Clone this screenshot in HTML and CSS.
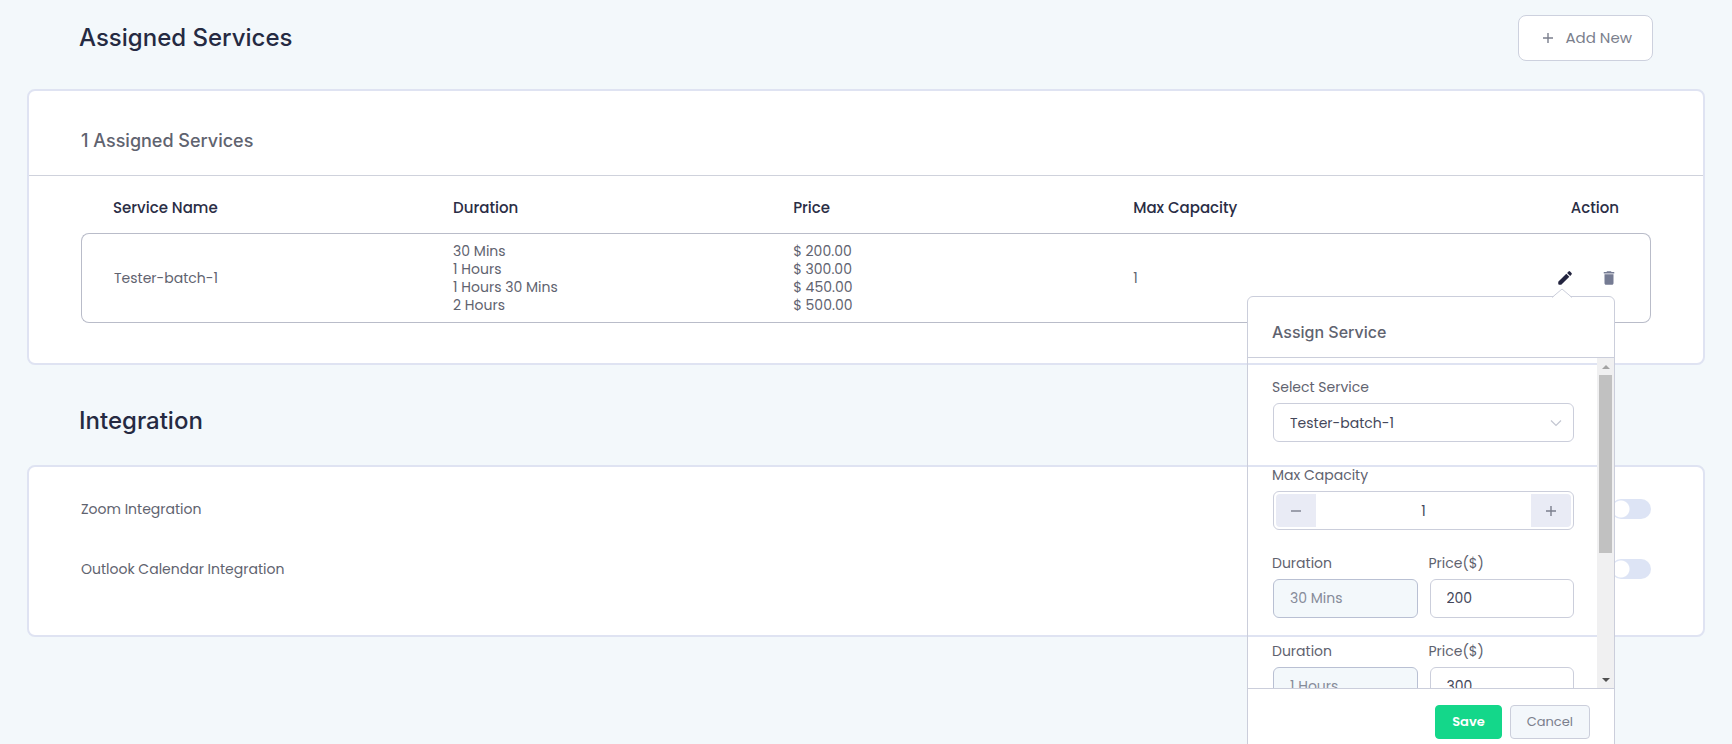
FILE: index.html
```html
<!DOCTYPE html>
<html lang="en">
<head>
<meta charset="utf-8">
<meta name="viewport" content="width=device-width, initial-scale=1">
<title>Assigned Services</title>
<link rel="stylesheet" href="styles.css">
</head>
<body>
<main class="page">
  <header class="section-head">
    <h1 class="title">Assigned Services</h1>
    <button class="add-btn" type="button">
      <svg class="add-icon" viewBox="0 0 12 12" aria-hidden="true"><path d="M6 1v10M1 6h10"/></svg>
      Add New
    </button>
  </header>

  <section class="card card-services">
    <h2 class="card-title">1 Assigned Services</h2>
    <div class="table-wrap">
      <table class="services">
        <thead>
          <tr><th class="col-name">Service Name</th><th class="col-mid">Duration</th><th class="col-mid">Price</th><th>Max Capacity</th><th class="col-action">Action</th></tr>
        </thead>
        <tbody>
          <tr>
            <td>Tester-batch-1</td>
            <td>30 Mins<br>1 Hours<br>1 Hours 30 Mins<br>2 Hours</td>
            <td>$ 200.00<br>$ 300.00<br>$ 450.00<br>$ 500.00</td>
            <td>1</td>
            <td>
              <div class="actions">
                <div class="edit">
                  <button class="icon-btn" type="button" aria-label="Edit">
                    <svg viewBox="0 0 24 24" aria-hidden="true"><path d="M3 17v2.600q0 1.400 1.400 1.400h2.600L17.800 10.300l-4.100-4.100zM20.700 7.300a1.500 1.500 0 0 0 0-2.100l-1.900-1.900a1.500 1.500 0 0 0-2.100 0l-1.900 2 4.100 4.100z"/></svg>
                  </button>
                  <form class="popover">
                    <svg class="popover-arrow" viewBox="0 0 20 10" aria-hidden="true"><path class="arrow-fill" d="M0 10 10 1 20 10z"/><path class="arrow-line" d="M0 9.500 10 1 20 9.500"/></svg>
                    <h3 class="popover-title">Assign Service</h3>
                    <div class="popover-body">
                      <div class="fields">
                        <div class="field">
                          <label for="service">Select Service</label>
                          <div class="select-wrap">
                            <select class="control" id="service"><option>Tester-batch-1</option></select>
                            <svg class="chevron" viewBox="0 0 12 8" aria-hidden="true"><path d="M1 1.500 6 6.500l5-5"/></svg>
                          </div>
                        </div>
                        <div class="field">
                          <label for="capacity">Max Capacity</label>
                          <div class="stepper">
                            <button class="step step-minus" type="button" aria-label="Decrease"><svg viewBox="0 0 12 12" aria-hidden="true"><path d="M1 6h10"/></svg></button>
                            <input class="step-value" id="capacity" type="text" value="1">
                            <button class="step step-plus" type="button" aria-label="Increase"><svg viewBox="0 0 12 12" aria-hidden="true"><path d="M6 1v10M1 6h10"/></svg></button>
                          </div>
                        </div>
                        <div class="pair">
                          <div class="field"><label for="d1">Duration</label><input class="control" id="d1" type="text" value="30 Mins" disabled></div>
                          <div class="field"><label for="p1">Price($)</label><input class="control" id="p1" type="text" value="200"></div>
                        </div>
                        <div class="pair">
                          <div class="field"><label for="d2">Duration</label><input class="control" id="d2" type="text" value="1 Hours" disabled></div>
                          <div class="field"><label for="p2">Price($)</label><input class="control" id="p2" type="text" value="300"></div>
                        </div>
                      </div>
                      <div class="scrollbar" aria-hidden="true">
                        <svg class="scroll-arrow scroll-up" viewBox="0 0 8 4"><path d="M0 4 4 0l4 4z"/></svg>
                        <div class="scroll-thumb"></div>
                        <svg class="scroll-arrow scroll-down" viewBox="0 0 8 4"><path d="M0 0l4 4 4-4z"/></svg>
                      </div>
                    </div>
                    <div class="popover-foot">
                      <button class="btn btn-save" type="button">Save</button>
                      <button class="btn btn-cancel" type="button">Cancel</button>
                    </div>
                  </form>
                </div>
                <button class="icon-btn icon-muted" type="button" aria-label="Delete">
                  <svg viewBox="0 0 24 24" aria-hidden="true"><path d="M6 19c0 1.100.9 2 2 2h8c1.100 0 2-.9 2-2V7H6zM19 4h-3.500l-1-1h-5l-1 1H5v2h14z"/></svg>
                </button>
              </div>
            </td>
          </tr>
        </tbody>
      </table>
    </div>
  </section>

  <header class="section-head section-head-integration">
    <h1 class="title">Integration</h1>
  </header>

  <section class="card card-integration">
    <div class="toggle-row"><label for="zoom">Zoom Integration</label><input class="toggle" id="zoom" type="checkbox" role="switch"></div>
    <div class="toggle-row"><label for="outlook">Outlook Calendar Integration</label><input class="toggle" id="outlook" type="checkbox" role="switch"></div>
  </section>
</main>
</body>
</html>
```
FILE: styles.css
```css
* { box-sizing: border-box; }

body {
  margin: 0;
  background: #f3f8fb;
  color: #5f636f;
  font: 400 14px/18px Poppins, Inter, sans-serif;
}

h1, h2, h3 { margin: 0; font-family: Inter, sans-serif; font-weight: 500; }
button, input, select { font: inherit; color: inherit; margin: 0; }
button { cursor: pointer; }
svg { display: block; }

.page {
  min-height: 100vh;
  padding: 0 27px;
  overflow: hidden;
}

.section-head {
  display: flex;
  align-items: center;
  justify-content: space-between;
  height: 89px;
  padding: 0 52px 13px;
}
.section-head-integration { height: 100px; padding-top: 25px; }
.title { color: #252a42; font-size: 24px; line-height: 32px; }

.add-btn {
  display: flex;
  align-items: center;
  gap: 11px;
  height: 46px;
  padding: 0 20px 0 23px;
  border: 1px solid #cdd1de;
  border-radius: 8px;
  background: #fff;
  color: #7b7f8d;
  font-size: 15px;
}
.add-icon { width: 12px; height: 12px; }
.add-icon path, .step path { fill: none; stroke: #7b7f8d; stroke-width: 1.4; }

.card {
  border: 2px solid #dfe3f2;
  border-radius: 8px;
  background: #fff;
}
.card-title {
  padding: 38px 52px 22px;
  border-bottom: 1px solid #cfd2dc;
  font-size: 18px;
  line-height: 24px;
}
.table-wrap { padding: 0 52px 40px; }

.services {
  width: 100%;
  border-spacing: 0;
  table-layout: fixed;
}
.services th {
  height: 57px;
  padding: 7px 0 0;
  color: #2a2d45;
  font-size: 15px;
  font-weight: 500;
  text-align: left;
}
.services .col-name { width: 23.7%; padding-left: 32px; }
.services .col-mid { width: 21.66%; }
.services .col-action { padding-right: 32px; text-align: right; }
.services td {
  padding: 8px 0;
  border: solid #b9bcc9;
  border-width: 1px 0;
}
.services td:first-child {
  padding-left: 32px;
  border-left-width: 1px;
  border-radius: 8px 0 0 8px;
}
.services td:last-child {
  padding-right: 32px;
  border-right-width: 1px;
  border-radius: 0 8px 8px 0;
}

.actions { display: flex; justify-content: flex-end; gap: 26px; }
.edit { position: relative; }
.icon-btn {
  display: block;
  width: 18px;
  height: 18px;
  padding: 0;
  border: 0;
  background: none;
  color: #23243f;
}
.icon-btn svg { width: 18px; height: 18px; fill: currentColor; }
.icon-muted { color: #757b93; }

.popover {
  position: absolute;
  z-index: 2;
  top: 27px;
  right: -41px;
  width: 368px;
  border: 1px solid #cbcedb;
  border-radius: 6px;
  background: #fff;
}
.popover-arrow {
  position: absolute;
  top: -9px;
  right: 42px;
  width: 20px;
  height: 10px;
}
.arrow-fill { fill: #fff; }
.arrow-line { fill: none; stroke: #cbcedb; }
.popover-title {
  padding: 23px 24px 13px;
  border-bottom: 1px solid #cbcedb;
  font-size: 16px;
  line-height: 24px;
}
.popover-body {
  display: flex;
  height: 330px;
  overflow: hidden;
  background:
    linear-gradient(#dfe3f2, #dfe3f2) 0 5px / 100% 2px no-repeat,
    linear-gradient(#dfe3f2, #dfe3f2) 0 107px / 100% 2px no-repeat,
    linear-gradient(#dfe3f2, #dfe3f2) 0 277px / 100% 2px no-repeat,
    #fff;
}
.fields { flex: 1; min-width: 0; padding: 20px 23px 0 25px; }
.field { min-width: 0; margin-bottom: 24px; }
.field label { display: block; margin-left: -1px; padding-bottom: 7px; }
.pair { display: grid; grid-template-columns: 1fr 1fr; gap: 12px; }

.control {
  display: block;
  width: 100%;
  height: 39px;
  padding: 0 16px;
  border: 1px solid #cbcedb;
  border-radius: 6px;
  background: #fff;
  color: #44475a;
  appearance: none;
}
.control:disabled {
  border-color: #b9c0d3;
  background: #f3f8fb;
  color: #868b99;
  opacity: 1;
}
.select-wrap { position: relative; }
.chevron {
  position: absolute;
  top: 16px;
  right: 12px;
  width: 12px;
  height: 8px;
  fill: none;
  stroke: #c3c6d1;
  stroke-width: 1.2;
  pointer-events: none;
}

.stepper {
  display: flex;
  height: 39px;
  padding: 2px;
  border: 1px solid #cbcedb;
  border-radius: 6px;
  background: #fff;
}
.step {
  display: grid;
  place-items: center;
  flex: none;
  width: 40px;
  padding: 0;
  border: 0;
  background: #e9ebf5;
}
.step-minus { border-radius: 4px 0 0 4px; }
.step-plus { border-radius: 0 4px 4px 0; }
.step svg { width: 12px; height: 12px; }
.step-value {
  flex: 1;
  min-width: 0;
  padding: 0;
  border: 0;
  background: none;
  color: #44475a;
  text-align: center;
}

.scrollbar {
  display: flex;
  flex: none;
  flex-direction: column;
  align-items: center;
  width: 17px;
  padding: 7px 0 6px;
  background: #f0f0f1;
}
.scroll-arrow { width: 8px; height: 4px; }
.scroll-up { fill: #a3a3a3; }
.scroll-down { margin-top: auto; fill: #505050; }
.scroll-thumb { width: 13px; height: 178px; margin-top: 6px; background: #c1c1c1; }

.popover-foot {
  display: flex;
  justify-content: flex-end;
  gap: 8px;
  padding: 16px 24px;
  border-top: 1px solid #cbcedb;
}
.btn {
  height: 34px;
  padding: 0 16px;
  border: 1px solid #cbcedb;
  border-radius: 4px;
  background: #f3f7fb;
  color: #7b7f8d;
  font-size: 13px;
}
.btn-save { border-color: #14d78a; background: #14d78a; color: #fff; font-weight: 600; }

.card-integration {
  display: flex;
  flex-direction: column;
  gap: 40px;
  padding: 32px 52px 56px;
}
.toggle-row { display: flex; align-items: center; justify-content: space-between; height: 20px; }
.toggle {
  width: 40px;
  height: 20px;
  border-radius: 10px;
  background: radial-gradient(circle at 10px 10px, #fff 8px, transparent 9px) #dde4f5;
  appearance: none;
}
```
